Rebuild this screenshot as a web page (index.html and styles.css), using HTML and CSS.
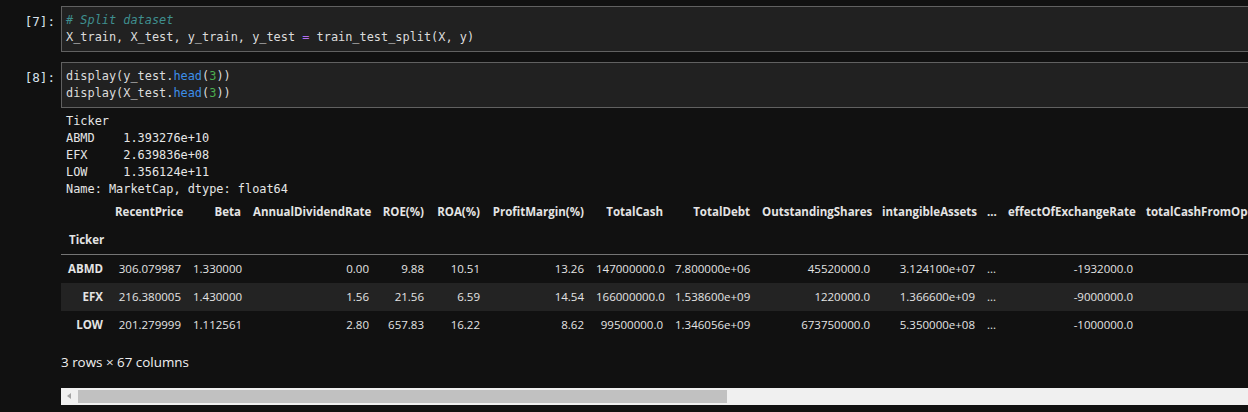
FILE: index.html
```html
<!DOCTYPE html>
<html>
<head>
<meta charset="utf-8">
<link rel="stylesheet" href="styles.css">
</head>
<body>
<div class="nb">
  <div class="cell">
    <div class="prompt">[7]:</div>
    <div class="editor"><div class="line"><span class="cm"># Split dataset</span></div><div class="line">X_train, X_test, y_train, y_test <span class="op">=</span> train_test_split(X, y)</div></div>
  </div>
  <div class="cell">
    <div class="prompt">[8]:</div>
    <div class="editor"><div class="line">display(y_test.<span class="pr">head</span>(<span class="nu">3</span>))</div><div class="line">display(X_test.<span class="pr">head</span>(<span class="nu">3</span>))</div></div>
  </div>
  <div class="output">
    <pre class="text">Ticker
ABMD    1.393276e+10
EFX     2.639836e+08
LOW     1.356124e+11
Name: MarketCap, dtype: float64</pre>
    <div class="tablewrap">
      <table class="df">
        <thead>
          <tr>
            <th class="c0"></th>
            <th class="c1">RecentPrice</th>
            <th class="c2">Beta</th>
            <th class="c3">AnnualDividendRate</th>
            <th class="c4">ROE(%)</th>
            <th class="c5">ROA(%)</th>
            <th class="c6">ProfitMargin(%)</th>
            <th class="c7">TotalCash</th>
            <th class="c8">TotalDebt</th>
            <th class="c9">OutstandingShares</th>
            <th class="c10">intangibleAssets</th>
            <th class="c11">...</th>
            <th class="c12">effectOfExchangeRate</th>
            <th class="c13">totalCashFromOpe</th>
          </tr>
          <tr class="idxrow">
            <th class="idxname">Ticker</th>
            <th></th><th></th><th></th><th></th><th></th><th></th><th></th><th></th><th></th><th></th><th></th><th></th><th></th>
          </tr>
        </thead>
        <tbody>
          <tr>
            <th>ABMD</th><td>306.079987</td><td>1.330000</td><td>0.00</td><td>9.88</td><td>10.51</td><td>13.26</td><td>147000000.0</td><td>7.800000e+06</td><td>45520000.0</td><td>3.124100e+07</td><td>...</td><td>-1932000.0</td><td></td>
          </tr>
          <tr class="odd">
            <th>EFX</th><td>216.380005</td><td>1.430000</td><td>1.56</td><td>21.56</td><td>6.59</td><td>14.54</td><td>166000000.0</td><td>1.538600e+09</td><td>1220000.0</td><td>1.366600e+09</td><td>...</td><td>-9000000.0</td><td></td>
          </tr>
          <tr>
            <th>LOW</th><td>201.279999</td><td>1.112561</td><td>2.80</td><td>657.83</td><td>16.22</td><td>8.62</td><td>99500000.0</td><td>1.346056e+09</td><td>673750000.0</td><td>5.350000e+08</td><td>...</td><td>-1000000.0</td><td></td>
          </tr>
        </tbody>
      </table>
    </div>
    <div class="summary">3 rows × 67 columns</div>
    <div class="hscroll">
      <div class="arrow"></div>
      <div class="track"><div class="thumb"></div></div>
    </div>
  </div>
</div>
</body>
</html>
```

FILE: styles.css
```css
html, body {
  margin: 0;
  padding: 0;
  background: #111111;
  overflow: hidden;
}

.nb {
  width: 1248px;
  height: 412px;
  overflow: hidden;
  padding-top: 6px;
  box-sizing: border-box;
}

.cell {
  display: flex;
  align-items: flex-start;
  margin-bottom: 10px;
  margin-right: -20px;
}

.prompt {
  width: 61px;
  flex: none;
  box-sizing: border-box;
  padding-right: 6px;
  padding-top: 7px;
  text-align: right;
  font-family: "DejaVu Sans Mono", monospace;
  font-size: 12.6px;
  line-height: 17px;
  color: #d8e2ec;
}

.editor {
  flex: 1;
  background: #212121;
  border: 1px solid #616161;
  padding: 5px 4px;
  font-family: "DejaVu Sans Mono", monospace;
  font-size: 11.9px;
  line-height: 17px;
  color: #dcdcdc;
  white-space: pre;
}

.cm { color: #3f8f8f; font-style: italic; }
.op { color: #b16cf0; }
.pr { color: #3d8ee8; }
.nu { color: #4caf50; }

.output {
  margin-left: 61px;
  margin-top: -5px;
}

.text {
  margin: 0;
  padding-left: 5px;
  font-family: "DejaVu Sans Mono", monospace;
  font-size: 11.9px;
  line-height: 17px;
  color: #e6e6e6;
}

.tablewrap {
  overflow: hidden;
  width: 1187px;
}

.df {
  border-collapse: collapse;
  table-layout: fixed;
  width: 1298px;
  font-family: "Open Sans", "Noto Sans", sans-serif;
  font-size: 11.5px;
  color: #e4e4e4;
}

.df th, .df td {
  box-sizing: border-box;
  padding: 6px 6px;
  line-height: 16px;
  height: 28px;
  text-align: right;
  white-space: nowrap;
  overflow: hidden;
}

.df th { font-weight: 700; }
.df td { font-weight: 400; }

.df thead tr.idxrow th {
  border-bottom: 1px solid #757575;
  height: 28px;
}

.df .idxname {
  text-align: left;
  padding-left: 8px;
}

.df tbody tr.odd { background: #232323; }

.c0 { width: 48px; }
.c1 { width: 78px; }
.c2 { width: 60px; }
.c3 { width: 128px; }
.c4 { width: 55px; }
.c5 { width: 56px; }
.c6 { width: 104px; }
.c7 { width: 79px; }
.c8 { width: 87px; }
.c9 { width: 120px; }
.c10 { width: 105px; }
.c11 { width: 21px; }
.c12 { width: 137px; }
.c13 { width: 220px; text-align: left !important; padding-left: 7px !important; }

.summary {
  margin-top: 14px;
  font-family: "Open Sans", "Noto Sans", sans-serif;
  font-size: 13.4px;
  line-height: 18px;
  color: #f0f0f0;
}

.hscroll {
  margin-top: 17px;
  height: 17px;
  background: #f0f0f0;
  display: flex;
  align-items: center;
  width: 1200px;
}

.arrow {
  width: 17px;
  height: 17px;
  flex: none;
  position: relative;
}

.arrow::before {
  content: "";
  position: absolute;
  left: 6px;
  top: 5px;
  border-style: solid;
  border-width: 3.5px 4px 3.5px 0;
  border-color: transparent #a3a3a3 transparent transparent;
}

.track {
  flex: 1;
  height: 13px;
}

.thumb {
  width: 649px;
  height: 13px;
  background: #c1c1c1;
}
```
